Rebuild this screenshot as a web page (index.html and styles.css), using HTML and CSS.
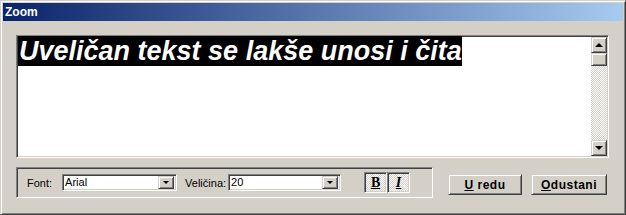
FILE: index.html
```html
<!DOCTYPE html>
<html lang="hr">
<head>
    <meta charset="UTF-8">
    <title>Zoom</title>
    <link rel="stylesheet" href="styles.css">
</head>
<body>
    <div class="window">
        <div class="titlebar">Zoom</div>
        <div class="client">
            <div class="editor">
                <div class="editor-text"><span class="sel">Uveličan tekst se lakše unosi i čita</span></div>
                <div class="vscroll">
                    <div class="sb-btn"><span class="arrow-up"></span></div>
                    <div class="sb-thumb"></div>
                    <div class="sb-track"></div>
                    <div class="sb-btn"><span class="arrow-down"></span></div>
                </div>
            </div>
            <div class="bottom">
                <div class="group">
                    <span class="label font-label">Font:</span>
                    <div class="combo font-combo">
                        <span class="combo-value">Arial</span>
                        <div class="drop"><span class="arrow-down small"></span></div>
                    </div>
                    <span class="label size-label">Veličina:</span>
                    <div class="combo size-combo">
                        <span class="combo-value">20</span>
                        <div class="drop"><span class="arrow-down small"></span></div>
                    </div>
                    <div class="toggles">
                        <div class="toggle bold"><u>B</u></div>
                        <div class="toggle italic"><u>I</u></div>
                    </div>
                </div>
                <div class="btn ok"><span><u>U</u> redu</span></div>
                <div class="btn cancel"><span><u>O</u>dustani</span></div>
            </div>
        </div>
    </div>
</body>
</html>
```
FILE: styles.css
```css
body {
    margin: 0;
    background-color: #d4d0c8;
    font-family: "Liberation Sans", Arial, sans-serif;
    font-size: 11px;
}
.window {
    width: 626px;
    height: 215px;
    box-sizing: border-box;
    background-color: #d4d0c8;
    border: 1px solid;
    border-color: #d4d0c8 #404040 #404040 #d4d0c8;
    box-shadow: inset 1px 1px #ffffff, inset -1px -1px #808080;
    padding: 2px;
    display: flex;
    flex-direction: column;
}
.titlebar {
    height: 18px;
    line-height: 18px;
    padding-left: 2px;
    color: #ffffff;
    font-weight: bold;
    font-size: 12px;
    background: linear-gradient(to right, #0a246a, #a6caf0);
}
.client {
    padding: 14px 14px 0 13px;
}
.editor {
    height: 123px;
    box-sizing: border-box;
    border: 1px solid;
    border-color: #808080 #ffffff #ffffff #808080;
    box-shadow: inset 1px 1px #404040, inset -1px -1px #d4d0c8;
    padding: 1px;
    background-color: #ffffff;
    display: flex;
}
.editor-text {
    flex: 1;
    font-size: 27px;
    font-weight: bold;
    font-style: italic;
    line-height: 29px;
}
.sel {
    background-color: #000000;
    color: #ffffff;
    padding-left: 1px;
}
.vscroll {
    width: 16px;
    display: flex;
    flex-direction: column;
}
.sb-btn,
.sb-thumb,
.drop,
.btn {
    box-sizing: border-box;
    background-color: #d4d0c8;
    border: 1px solid;
    border-color: #d4d0c8 #404040 #404040 #d4d0c8;
    box-shadow: inset 1px 1px #ffffff, inset -1px -1px #808080;
}
.sb-btn {
    height: 16px;
    display: flex;
    align-items: center;
    justify-content: center;
}
.sb-thumb {
    height: 13px;
}
.sb-track {
    flex: 1;
    background: repeating-conic-gradient(#ffffff 0 25%, #d4d0c8 0 50%) 0 0 / 2px 2px;
}
.arrow-up {
    width: 0;
    height: 0;
    border-left: 4px solid transparent;
    border-right: 4px solid transparent;
    border-bottom: 4px solid #000000;
}
.arrow-down {
    width: 0;
    height: 0;
    border-left: 4px solid transparent;
    border-right: 4px solid transparent;
    border-top: 4px solid #000000;
}
.arrow-down.small {
    border-left-width: 3px;
    border-right-width: 3px;
    border-top-width: 3px;
}
.bottom {
    margin-top: 9px;
    display: flex;
    align-items: flex-start;
}
.group {
    width: 417px;
    height: 31px;
    box-sizing: border-box;
    border: 1px solid;
    border-color: #808080 #ffffff #ffffff #808080;
    box-shadow: inset 1px 1px #404040, inset -1px -1px #d4d0c8;
    padding-left: 10px;
    display: flex;
    align-items: center;
}
.label {
    color: #000000;
}
.font-label {
    margin-right: 10px;
}
.size-label {
    margin-left: 8px;
    margin-right: 2px;
}
.combo {
    height: 17px;
    box-sizing: border-box;
    border: 1px solid;
    border-color: #808080 #ffffff #ffffff #808080;
    box-shadow: inset 1px 1px #404040, inset -1px -1px #d4d0c8;
    padding: 2px;
    background-color: #ffffff;
    display: flex;
    align-items: center;
}
.font-combo {
    width: 115px;
}
.size-combo {
    width: 113px;
}
.combo-value {
    flex: 1;
    line-height: 13px;
}
.drop {
    width: 16px;
    height: 13px;
    display: flex;
    align-items: center;
    justify-content: center;
}
.toggles {
    margin-left: 23px;
    display: flex;
}
.toggle {
    width: 23px;
    height: 21px;
    box-sizing: border-box;
    border: 1px solid;
    border-color: #808080 #ffffff #ffffff #808080;
    box-shadow: inset 1px 1px #404040, inset -1px -1px #d4d0c8;
    background: repeating-conic-gradient(#ffffff 0 25%, #d4d0c8 0 50%) 0 0 / 2px 2px;
    font-family: "Liberation Serif", "Times New Roman", serif;
    font-weight: bold;
    font-size: 14px;
    display: flex;
    align-items: center;
    justify-content: center;
    padding-top: 1px;
}
.toggle.italic {
    font-style: italic;
}
.btn {
    height: 21px;
    margin-top: 7px;
    font-weight: bold;
    font-size: 12px;
    letter-spacing: 0.5px;
    display: flex;
    align-items: center;
    justify-content: center;
}
.ok {
    width: 74px;
    margin-left: 15px;
}
.cancel {
    width: 76px;
    margin-left: 9px;
}
```
